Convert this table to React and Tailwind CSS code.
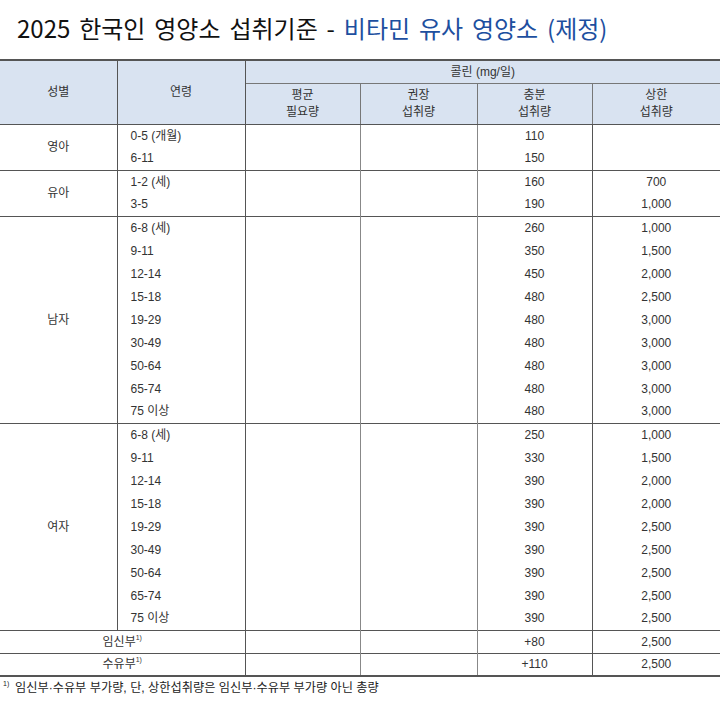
import React from "react";

const groups = [
  { label: "영아", rows: [["0-5 (개월)", "110", ""], ["6-11", "150", ""]] },
  { label: "유아", rows: [["1-2 (세)", "160", "700"], ["3-5", "190", "1,000"]] },
  {
    label: "남자",
    rows: [
      ["6-8 (세)", "260", "1,000"],
      ["9-11", "350", "1,500"],
      ["12-14", "450", "2,000"],
      ["15-18", "480", "2,500"],
      ["19-29", "480", "3,000"],
      ["30-49", "480", "3,000"],
      ["50-64", "480", "3,000"],
      ["65-74", "480", "3,000"],
      ["75 이상", "480", "3,000"],
    ],
  },
  {
    label: "여자",
    rows: [
      ["6-8 (세)", "250", "1,000"],
      ["9-11", "330", "1,500"],
      ["12-14", "390", "2,000"],
      ["15-18", "390", "2,000"],
      ["19-29", "390", "2,500"],
      ["30-49", "390", "2,500"],
      ["50-64", "390", "2,500"],
      ["65-74", "390", "2,500"],
      ["75 이상", "390", "2,500"],
    ],
  },
];

const font = { fontFamily: '"Liberation Sans Narrow", "Liberation Sans", "Noto Sans CJK KR", sans-serif' };

export default function App() {
  return (
    <div className="w-[720px] h-[706px] bg-white text-[#333]" style={font}>
      <div
        className="pl-[17px] pt-[12px] h-[59px] text-[24px] leading-[32px] text-[#111] [word-spacing:3.5px]"
        style={{ fontFamily: '"Noto Sans CJK KR", sans-serif' }}
      >
        2025 한국인 영양소 섭취기준 - <span className="text-[#1d4f9f]">비타민 유사 영양소 (제정)</span>
      </div>
      <table className="w-[720px] border-collapse table-fixed text-[12px] leading-[14px]">
        <colgroup>
          <col className="w-[117px]" />
          <col className="w-[128px]" />
          <col className="w-[115px]" />
          <col className="w-[117px]" />
          <col className="w-[115px]" />
          <col className="w-[128px]" />
        </colgroup>
        <thead>
          <tr className="h-[23px] bg-[#d9e3f1]">
            <th rowSpan={2} className="font-normal border-t-2 border-t-[#555] border-b border-b-[#555] border-r border-r-[#555] text-center">성별</th>
            <th rowSpan={2} className="font-normal border-t-2 border-t-[#555] border-b border-b-[#555] border-r border-r-[#555] text-center">연령</th>
            <th colSpan={4} className="font-normal border-t-2 border-t-[#555] border-b border-b-[#777] text-center">콜린 (mg/일)</th>
          </tr>
          <tr className="h-[41px] bg-[#d9e3f1]">
            {[["평균", "필요량"], ["권장", "섭취량"], ["충분", "섭취량"], ["상한", "섭취량"]].map((h, i) => (
              <th
                key={i}
                className={`font-normal border-b border-b-[#555] text-center leading-[17px] ${i < 3 ? "border-r border-r-[#777]" : ""}`}
              >
                {h[0]}
                <br />
                {h[1]}
              </th>
            ))}
          </tr>
        </thead>
        <tbody>
          {groups.map((g) =>
            g.rows.map((r, i) => (
              <tr key={g.label + i} className={`h-[23px] ${i === g.rows.length - 1 ? "border-b border-b-[#555]" : ""}`}>
                {i === 0 && (
                  <td rowSpan={g.rows.length} className="border-r border-r-[#555] text-center">
                    {g.label}
                  </td>
                )}
                <td className="border-r border-r-[#555] pl-[13px]">{r[0]}</td>
                <td className="border-r border-r-[#888]"></td>
                <td className="border-r border-r-[#888]"></td>
                <td className="border-r border-r-[#555] text-center">{r[1]}</td>
                <td className="text-center">{r[2]}</td>
              </tr>
            ))
          )}
          <tr className="h-[23px] border-b border-b-[#555]">
            <td colSpan={2} className="border-r border-r-[#555] text-center">
              임신부<sup className="text-[7px] -top-[6px]">1)</sup>
            </td>
            <td className="border-r border-r-[#888]"></td>
            <td className="border-r border-r-[#888]"></td>
            <td className="border-r border-r-[#555] text-center">+80</td>
            <td className="text-center">2,500</td>
          </tr>
          <tr className="h-[23px] border-b-2 border-b-[#555]">
            <td colSpan={2} className="border-r border-r-[#555] text-center">
              수유부<sup className="text-[7px] -top-[6px]">1)</sup>
            </td>
            <td className="border-r border-r-[#888]"></td>
            <td className="border-r border-r-[#888]"></td>
            <td className="border-r border-r-[#555] text-center">+110</td>
            <td className="text-center">2,500</td>
          </tr>
        </tbody>
      </table>
      <div className="pl-[3px] pt-[3px] text-[12.2px] leading-[16px] text-[#222] flex">
        <sup className="text-[7px] top-[4px] w-[12px]">1)</sup>
        <span>임신부·수유부 부가량, 단, 상한섭취량은 임신부·수유부 부가량 아닌 총량</span>
      </div>
    </div>
  );
}
